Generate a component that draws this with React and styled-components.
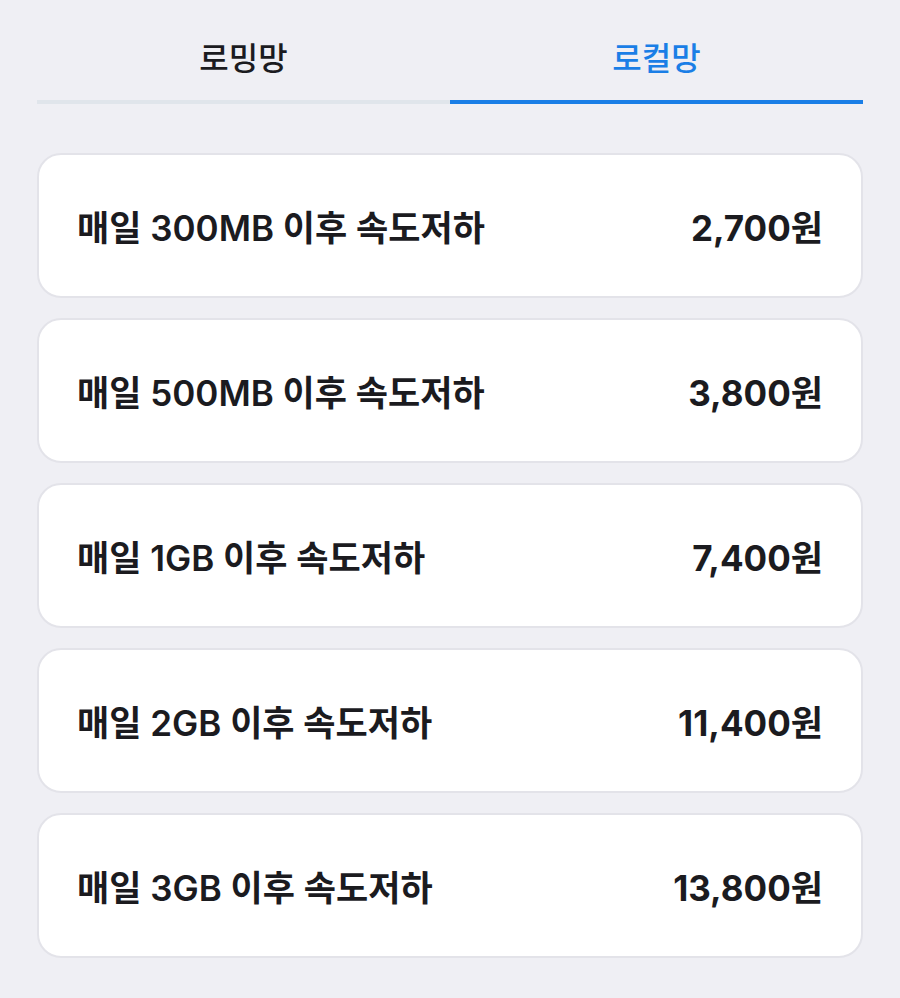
import React, { useState } from "react";
import styled, { createGlobalStyle } from "styled-components";

const GlobalStyle = createGlobalStyle`
  body {
    margin: 0;
    background: #efeff4;
    font-family: Inter, "Noto Sans CJK KR", "Noto Sans", sans-serif;
    color: #1b1b1f;
  }
`;

const Page = styled.div`
  padding: 0 37px 40px 37px;
`;

const Tabs = styled.div`
  display: flex;
`;

const Tab = styled.button`
  flex: 1;
  height: 104px;
  padding: 12px 0 0 0;
  border: none;
  background: none;
  font-family: inherit;
  font-size: 32px;
  font-weight: 500;
  color: ${(p) => (p.active ? "#1a7ee6" : "#1b1b1f")};
  border-bottom: 4px solid ${(p) => (p.active ? "#1a7ee6" : "#e0e5eb")};
  cursor: pointer;
`;

const List = styled.div`
  display: flex;
  flex-direction: column;
  gap: 20px;
  margin-top: 49px;
`;

const Card = styled.div`
  height: 145px;
  box-sizing: border-box;
  background: #ffffff;
  border: 2px solid #e3e3e9;
  border-radius: 24px;
  display: flex;
  align-items: center;
  justify-content: space-between;
  padding: 0 38px;
`;

const Name = styled.span`
  font-size: 35px;
  font-weight: 600;
`;

const Price = styled.span`
  font-size: 35px;
  font-weight: 700;
`;

const plans = [
  { name: "매일 300MB 이후 속도저하", price: "2,700원" },
  { name: "매일 500MB 이후 속도저하", price: "3,800원" },
  { name: "매일 1GB 이후 속도저하", price: "7,400원" },
  { name: "매일 2GB 이후 속도저하", price: "11,400원" },
  { name: "매일 3GB 이후 속도저하", price: "13,800원" },
];

export default function App() {
  const [tab, setTab] = useState("local");
  return (
    <Page>
      <GlobalStyle />
      <Tabs>
        <Tab active={tab === "roaming"} onClick={() => setTab("roaming")}>
          로밍망
        </Tab>
        <Tab active={tab === "local"} onClick={() => setTab("local")}>
          로컬망
        </Tab>
      </Tabs>
      <List>
        {plans.map((plan) => (
          <Card key={plan.name}>
            <Name>{plan.name}</Name>
            <Price>{plan.price}</Price>
          </Card>
        ))}
      </List>
    </Page>
  );
}
